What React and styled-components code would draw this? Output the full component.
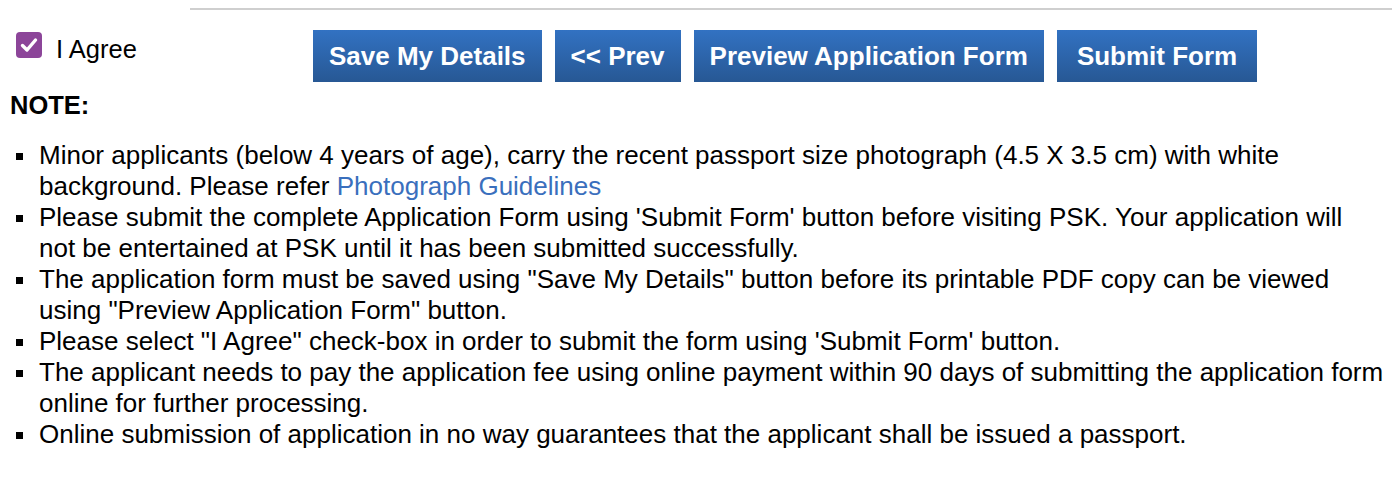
import React from "react";
import styled, { createGlobalStyle } from "styled-components";

const Global = createGlobalStyle`
  html, body { margin: 0; padding: 0; background: #fff; }
  body { font-family: "Liberation Sans", Arial, sans-serif; color: #000; }
`;

const Page = styled.div`
  width: 1392px;
  height: 479px;
  overflow: hidden;
  padding: 8px 0 0 0;
  box-sizing: border-box;
`;

const Rule = styled.div`
  margin-left: 190px;
  height: 2px;
  background: #cfcfcf;
`;

const ActionRow = styled.div`
  display: flex;
  align-items: flex-start;
  padding: 20px 0 0 16px;
`;

const AgreeLabel = styled.label`
  display: flex;
  align-items: flex-start;
  gap: 14px;
  width: 297px;
  margin-top: 4px;
  font-size: 25.5px;
  line-height: 30px;
  cursor: pointer;
`;

const Box = styled.span`
  width: 26px;
  height: 26px;
  margin-top: -2px;
  border-radius: 4px;
  background: #8c4599;
  display: flex;
  align-items: center;
  justify-content: center;
  flex: none;
`;

const Buttons = styled.div`
  display: flex;
  gap: 13px;
`;

const Button = styled.button`
  height: 52px;
  padding: 0 ${(p) => p.$pad || 16}px;
  border: none;
  background: linear-gradient(#3272c2, #275894);
  color: #fff;
  font-family: "Liberation Sans", Arial, sans-serif;
  font-weight: bold;
  font-size: 26px;
  cursor: pointer;
`;

const Note = styled.div`
  margin: 8px 0 0 10px;
  font-weight: bold;
  font-size: 25.5px;
  line-height: 30px;
`;

const List = styled.ul`
  list-style: none;
  margin: 19.5px 0 0 0;
  padding: 0 7.5px 0 39px;
  font-size: 26px;
  line-height: 31px;
`;

const Item = styled.li`
  position: relative;
  &::before {
    content: "";
    position: absolute;
    left: -23px;
    top: 13px;
    width: 7px;
    height: 7px;
    background: #000;
  }
`;

const Link = styled.a`
  color: #3a6fbd;
  text-decoration: none;
`;

export default function App() {
  return (
    <Page>
      <Global />
      <Rule />
      <ActionRow>
        <AgreeLabel>
          <Box>
            <svg width="20" height="20" viewBox="0 0 20 20">
              <path d="M3.5 10.5 L8 15 L16.5 5" stroke="#fff" strokeWidth="3.4" fill="none" strokeLinecap="round" strokeLinejoin="round" />
            </svg>
          </Box>
          I Agree
        </AgreeLabel>
        <Buttons>
          <Button>Save My Details</Button>
          <Button>&lt;&lt; Prev</Button>
          <Button>Preview Application Form</Button>
          <Button $pad={20}>Submit Form</Button>
        </Buttons>
      </ActionRow>
      <Note>NOTE:</Note>
      <List>
        <Item>
          Minor applicants (below 4 years of age), carry the recent passport size photograph (4.5 X 3.5 cm) with white background. Please refer <Link href="#">Photograph Guidelines</Link>
        </Item>
        <Item>
          Please submit the complete Application Form using 'Submit Form' button before visiting PSK. Your application will not be entertained at PSK until it has been submitted successfully.
        </Item>
        <Item>
          The application form must be saved using "Save My Details" button before its printable PDF copy can be viewed using "Preview Application Form" button.
        </Item>
        <Item>Please select "I Agree" check-box in order to submit the form using 'Submit Form' button.</Item>
        <Item>
          The applicant needs to pay the application fee using online payment within 90 days of submitting the application form online for further processing.
        </Item>
        <Item>Online submission of application in no way guarantees that the applicant shall be issued a passport.</Item>
      </List>
    </Page>
  );
}
